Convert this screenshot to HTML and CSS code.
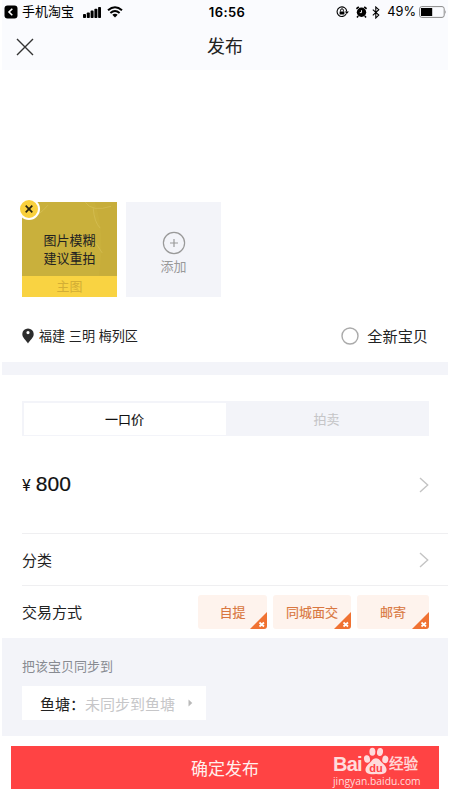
FILE: index.html
```html
<!DOCTYPE html>
<html lang="zh-CN">
<head>
<meta charset="utf-8">
<title>发布</title>
<link rel="stylesheet" href="styles.css">
</head>
<body>
<div class="screen">
  <header class="header">
    <div class="status">
      <div class="status-left">
        <svg width="14" height="14" viewBox="0 0 14 14"><rect x=".5" y=".5" width="13" height="13" rx="3"/><path d="M8.3 3.8 5 7l3.3 3.2" fill="none" stroke="#fff" stroke-width="1.6"/></svg>
        <span class="carrier">手机淘宝</span>
        <svg class="signal" width="18" height="11" viewBox="0 0 18 11"><rect y="7" width="3" height="4" rx=".8"/><rect x="3.8" y="5.4" width="3" height="5.6" rx=".8"/><rect x="7.6" y="3.6" width="3" height="7.4" rx=".8"/><rect x="11.4" y="1.8" width="3" height="9.2" rx=".8"/><rect x="15.1" width="2.9" height="11" rx=".8"/></svg>
        <svg class="wifi" width="16" height="12" viewBox="0 0 16 12"><path d="M1 4.3Q8-1.8 15 4.3M3.4 7Q8 3.1 12.6 7" fill="none" stroke="#000" stroke-width="2"/><path d="M5.3 8.8Q8 6.7 10.7 8.8L8 11.6Z"/></svg>
      </div>
      <div class="time">16:56</div>
      <div class="status-right">
        <svg width="13" height="12" viewBox="0 0 13 12"><path d="M10.3 7.6a4.8 4.8 0 1 1 .4-2" fill="none" stroke="#000" stroke-width="1.1"/><path d="M8.8 5.4h4.1L10.8 8ZM3.6 5.4h4.8v3.2H3.6Z"/><path d="M4.6 5.5V4.2a1.4 1.4 0 0 1 2.8 0v1.3" fill="none" stroke="#000"/></svg>
        <svg class="alarm" width="11" height="12" viewBox="0 0 11 12"><circle cx="5.5" cy="6.3" r="4.7"/><path d="M.4 2.8 2.8.8M8.2.8l2.4 2M2.2 10 1 11.4M8.8 10l1.2 1.4" stroke="#000" stroke-width="1.6"/><path d="M5.5 4.2v2.4H3.8" fill="none" stroke="#fff" stroke-width=".9"/></svg>
        <svg class="bluetooth" width="8" height="13" viewBox="0 0 8 13"><path d="m.8 3.6 6 5.5L3.8 12V1l3 2.7-6 5.6" fill="none" stroke="#000" stroke-width="1.1"/></svg>
        <span class="percent">49%</span>
        <svg class="battery" width="28" height="12" viewBox="0 0 28 12"><rect x=".6" y=".6" width="24.6" height="10.8" rx="2.2" fill="none" stroke="#888"/><rect x="2" y="2" width="11.2" height="8"/><path d="M26.3 4v4q1.5-2 0-4" fill="#888"/></svg>
      </div>
    </div>
    <div class="nav">
      <svg class="close" width="18" height="18" viewBox="0 0 18 18"><path d="m1 1 16 16M17 1 1 17" stroke="#333" stroke-width="1.4"/></svg>
      <h1>发布</h1>
    </div>
  </header>

  <section class="photos">
    <div class="photo">
      <svg class="texture" width="96" height="74" viewBox="0 0 96 74"><path d="M74 0h22v74H78Q84 30 74 0" fill="#c5aa38" opacity=".5"/><path d="M8 15Q17 14 26 3M64 0q7 10 26 4M48 33q23-3 33 18M72 6q1 14 7 20" fill="none" stroke="#d8c25c" opacity=".6"/></svg>
      <p class="warning">图片模糊<br>建议重拍</p>
      <div class="main-label">主图</div>
      <svg class="remove" width="22" height="22" viewBox="0 0 22 22"><circle cx="11" cy="11" r="10" fill="#f9d03d" stroke="#fff" stroke-width="2"/><path d="m7.7 7.7 6.6 6.6m0-6.6-6.6 6.6" stroke="#29250f" stroke-width="1.7"/></svg>
    </div>
    <div class="add">
      <svg width="24" height="24" viewBox="0 0 24 24"><path d="M12 8v8M8 12h8" stroke="#999" stroke-width="1.2"/><circle cx="12" cy="12" r="10.6" fill="none" stroke="#999" stroke-width="1.2"/></svg>
      <span>添加</span>
    </div>
  </section>

  <section class="location">
    <svg width="12" height="16" viewBox="0 0 12 16"><path fill="#2d2d2d" fill-rule="evenodd" d="M6 .4A5.7 5.7 0 0 0 .3 6C.3 9.9 4.1 12.2 6 15.5 7.9 12.2 11.7 9.9 11.7 6A5.7 5.7 0 0 0 6 .4m0 2.6a1.6 1.6 0 1 1 0 3.2A1.6 1.6 0 0 1 6 3"/></svg>
    <span class="place">福建 三明 梅列区</span>
    <svg class="radio" width="18" height="18" viewBox="0 0 18 18"><circle cx="9" cy="9" r="8" fill="none" stroke="#aaa" stroke-width="1.4"/></svg>
    <span class="brand-new">全新宝贝</span>
  </section>
  <div class="band"></div>

  <div class="tabs"><div class="tab active">一口价</div><div class="tab">拍卖</div></div>

  <div class="row price">
    <div><span class="yen">¥</span><span class="amount">800</span></div>
    <svg width="10" height="16" viewBox="0 0 10 16"><path d="m1 1 7.7 7L1 15" fill="none" stroke="#c4c4c4" stroke-width="1.4"/></svg>
  </div>
  <div class="row category">
    <span>分类</span>
    <svg width="10" height="16" viewBox="0 0 10 16"><path d="m1 1 7.7 7L1 15" fill="none" stroke="#c4c4c4" stroke-width="1.4"/></svg>
  </div>
  <div class="row trade">
    <span>交易方式</span>
    <div class="chips">
      <div class="chip">自提<svg class="corner" width="17" height="17" viewBox="0 0 17 17"><path d="M17 0v14q0 3-3 3H0Z" fill="#f07232"/><path d="m9.5 10.5 4.5 4m0-4-4.5 4" stroke="#fff" stroke-width="1.7"/></svg></div>
      <div class="chip wide">同城面交<svg class="corner" width="17" height="17" viewBox="0 0 17 17"><path d="M17 0v14q0 3-3 3H0Z" fill="#f07232"/><path d="m9.5 10.5 4.5 4m0-4-4.5 4" stroke="#fff" stroke-width="1.7"/></svg></div>
      <div class="chip last">邮寄<svg class="corner" width="17" height="17" viewBox="0 0 17 17"><path d="M17 0v14q0 3-3 3H0Z" fill="#f07232"/><path d="m9.5 10.5 4.5 4m0-4-4.5 4" stroke="#fff" stroke-width="1.7"/></svg></div>
    </div>
  </div>

  <section class="sync">
    <p>把该宝贝同步到</p>
    <div class="pond"><span>鱼塘：</span><span class="none">未同步到鱼塘</span><svg width="5" height="8" viewBox="0 0 5 8"><path d="M.5.5v7L4.3 4Z" fill="#b9b9b9"/></svg></div>
  </section>

  <footer class="submit">
    <span>确定发布</span>
    <div class="watermark">
      <div class="logo">
        <span class="bai">Bai</span>
        <svg width="26" height="28" viewBox="0 0 26 28"><g fill="#ffdcdc"><ellipse cx="4" cy="12" rx="3" ry="3.8" transform="rotate(-12 4 12)"/><ellipse cx="9.4" cy="4.8" rx="3" ry="4"/><ellipse cx="17" cy="5" rx="3" ry="4" transform="rotate(10 17 5)"/><ellipse cx="22.3" cy="12.4" rx="3" ry="3.8" transform="rotate(12 22.3 12.4)"/><path d="M13 11.2c3.2 0 4.3 3 7.2 5.6 2.8 2.7 4 5 3 7.7-1.2 3.1-5.2 2.8-10.2 2.4-5 .4-9 .7-10.2-2.4-1-2.7.2-5 3-7.7 2.9-2.6 4-5.6 7.2-5.6Z"/></g><text x="13" y="24.5" text-anchor="middle" class="du">du</text></svg>
        <span class="jingyan">经验</span>
      </div>
      <div class="url">jingyan.baidu.com</div>
    </div>
  </footer>
</div>
</body>
</html>
```
FILE: styles.css
```css
* { box-sizing: border-box; }
body { margin: 0; background: #fff; color: #222; font-family: "Liberation Sans", "Noto Sans CJK SC", sans-serif; }
h1, p { margin: 0; font-weight: 400; }
svg { display: block; flex-shrink: 0; }
.screen { width: 446px; height: 800px; margin-left: 2px; display: flex; flex-direction: column; overflow: hidden; }
.header { height: 70px; background: #fafbfe; flex-shrink: 0; }
.status { height: 24px; padding: 0 1px 0 2px; display: grid; grid-template-columns: 1fr 46px 1fr; align-items: center; color: #000; }
.status-left, .status-right { display: flex; align-items: center; }
.carrier { margin-left: 4px; font-size: 13px; line-height: 20px; }
.signal { margin-left: 9px; }
.wifi { margin-left: 6px; }
.time { padding-left: 3px; text-align: center; font: 600 13px/20px Inter, sans-serif; letter-spacing: .4px; white-space: nowrap; }
.status-right { justify-content: flex-end; }
.alarm { margin-left: 7px; }
.bluetooth { margin-left: 5px; }
.percent { margin-left: 7px; font: 12.8px/20px Inter, sans-serif; }
.battery { margin-left: 3px; }
.nav { height: 46px; display: grid; grid-template-columns: 50px 1fr 50px; align-items: center; }
.close { margin-left: 14px; }
.nav h1 { font-size: 18px; line-height: 24px; text-align: center; }
.photos { height: 227px; padding: 132px 0 0 20px; display: flex; gap: 9px; }
.photo { position: relative; width: 95px; height: 95px; background: #c9b03c; display: flex; flex-direction: column; }
.texture { position: absolute; left: 0; top: 0; width: 95px; }
.warning { position: relative; height: 74px; padding-top: 30px; text-align: center; font-size: 13px; line-height: 18px; }
.main-label { height: 21px; background: #f9d342; color: #d3ae35; text-align: center; font-size: 13px; line-height: 21px; }
.remove { position: absolute; left: -4px; top: -4px; }
.add { width: 95px; height: 95px; padding-top: 29px; background: #f3f4f9; display: flex; flex-direction: column; align-items: center; gap: 2px; color: #999; font-size: 13px; line-height: 20px; }
.location { height: 65px; padding: 13px 20px 0; display: flex; align-items: center; }
.place { margin-left: 5px; padding-top: 1px; font-size: 13.1px; line-height: 20px; }
.radio { margin-left: auto; }
.brand-new { margin-left: 8px; padding-top: 1px; font-size: 15.2px; line-height: 22px; }
.band { height: 13px; background: #f3f4f9; }
.tabs { height: 35px; margin: 26px 19px 0 20px; padding: 1.5px; background: #f3f4f9; display: grid; grid-template-columns: 1fr 1fr; flex-shrink: 0; }
.tab { display: flex; justify-content: center; align-items: center; font-size: 13px; color: #c5c5c7; }
.tab.active { background: #fff; color: #111; -webkit-text-stroke: .15px #111; }
.row { margin-left: 20px; padding-right: 19px; display: flex; align-items: center; justify-content: space-between; font-size: 15px; flex-shrink: 0; }
.price { height: 98px; border-bottom: 1px solid #efeff1; }
.price > div { padding-top: 1px; font-family: "Liberation Sans", sans-serif; line-height: 24px; color: #111; }
.yen { font-family: Inter, sans-serif; font-size: 16px; }
.amount { margin-left: 5px; font-size: 21px; -webkit-text-stroke: .2px #111; }
.category { height: 52px; border-bottom: 1px solid #efeff1; }
.trade { height: 52px; padding-bottom: 1px; }
.chips { display: flex; gap: 6px; }
.chip { position: relative; width: 69px; height: 34px; border-radius: 3px; background: #fef3ed; color: #d97740; display: flex; align-items: center; justify-content: center; font-size: 13px; -webkit-text-stroke: .15px #d97740; }
.wide { width: 78px; }
.last { width: 72px; }
.corner { position: absolute; right: 0; bottom: 0; }
.sync { height: 98px; padding: 19px 20px 0; background: #f3f4f9; flex-shrink: 0; }
.sync p { color: #888b91; font-size: 13px; line-height: 20px; }
.pond { width: 184px; height: 34px; margin-top: 9px; padding-left: 18px; background: #fff; display: flex; align-items: center; font-size: 15px; }
.pond .none { color: #c6c6c8; }
.pond svg { margin-left: 13px; }
.submit { position: relative; height: 43px; margin: 10px 9px 0; background: #ff4344; color: #fff0ed; display: flex; align-items: center; justify-content: center; font-size: 17px; flex-shrink: 0; }
.watermark { position: absolute; left: 322px; top: 0; width: 90px; color: #ffdcdc; }
.logo { height: 29px; display: flex; align-items: flex-end; }
.bai { width: 29px; font: 700 20px/21px "Liberation Sans", sans-serif; letter-spacing: -.8px; }
.logo svg { margin-left: 1px; }
.du { font: 700 11px "Liberation Sans", sans-serif; fill: #ff4344; }
.jingyan { font-size: 14.5px; line-height: 21px; font-weight: 400; -webkit-text-stroke: .4px #ffdcdc; white-space: nowrap; }
.url { font: 10.3px/13px "Open Sans", sans-serif; white-space: nowrap; }
```
